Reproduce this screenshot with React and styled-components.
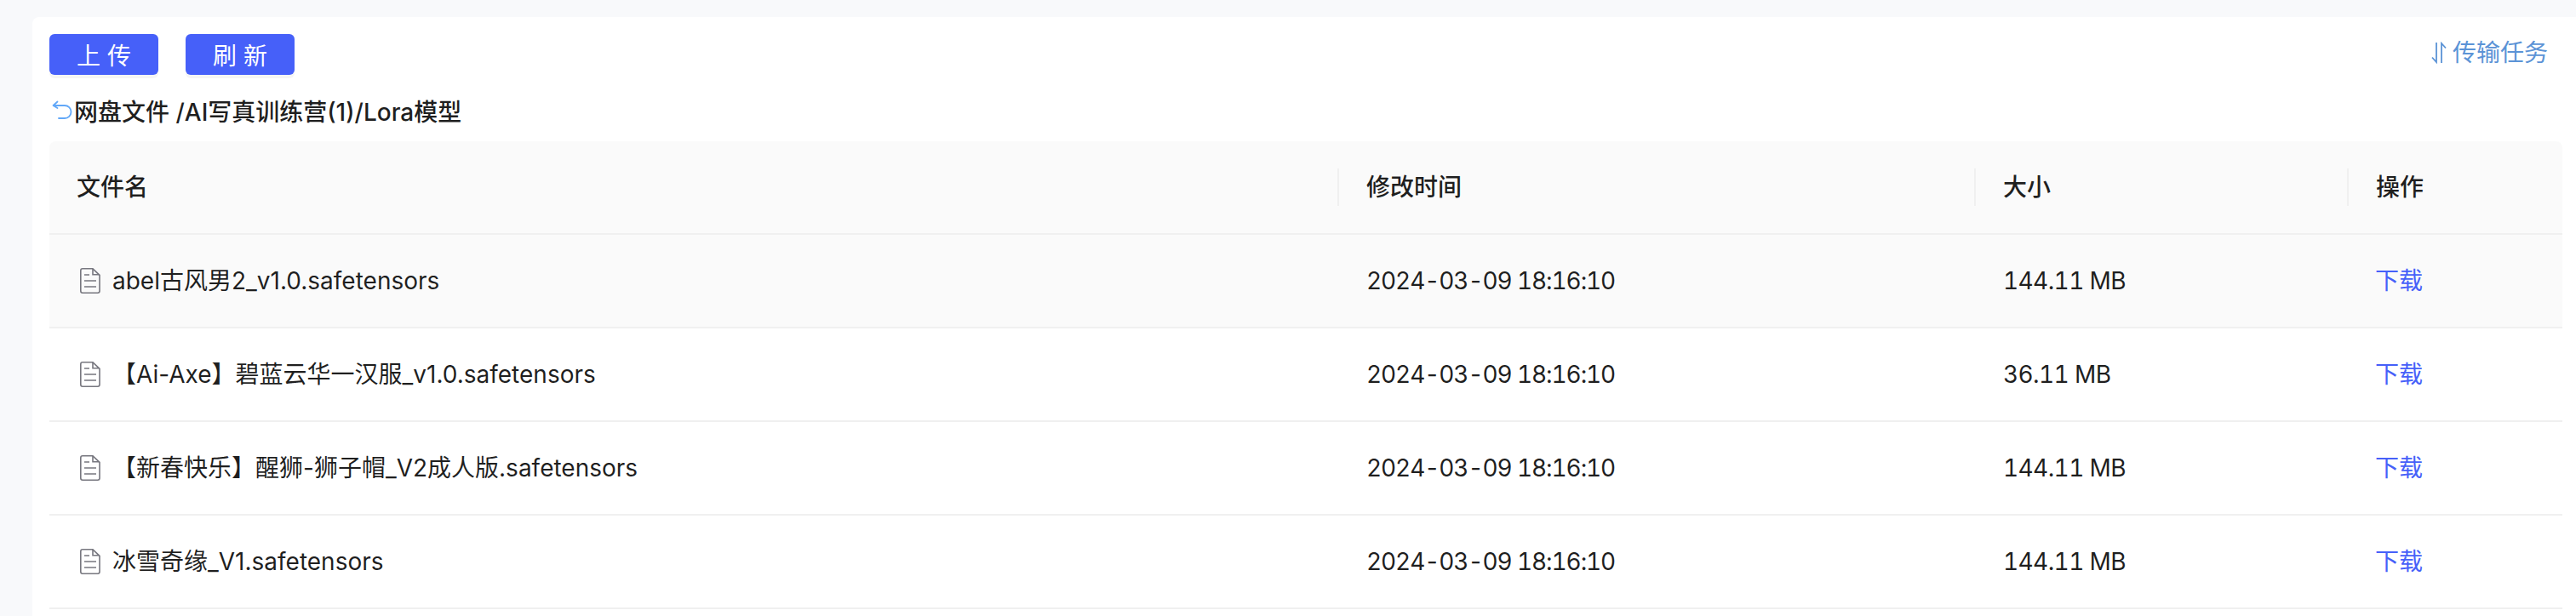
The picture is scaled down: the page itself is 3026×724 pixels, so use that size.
import React from 'react';
import styled, { createGlobalStyle } from 'styled-components';

const fontStack = `Inter, "Noto Sans CJK SC", "Noto Sans", sans-serif`;

const GlobalStyle = createGlobalStyle`
  html, body {
    margin: 0;
    height: 100%;
    overflow: hidden;
    background: #f8f9fb;
    font-family: ${fontStack};
  }
  * { box-sizing: border-box; }
`;

const Page = styled.div`
  padding: 20px 0 0 38px;
  height: 724px;
  overflow: hidden;
`;

const Card = styled.div`
  background: #fff;
  border-radius: 8px 0 0 0;
  padding: 20px 16px 0 20px;
  height: 704px;
`;

const Toolbar = styled.div`
  display: flex;
  justify-content: space-between;
  align-items: flex-start;
  height: 48px;
`;

const ButtonGroup = styled.div`
  display: flex;
  gap: 32px;
`;

const Button = styled.button`
  width: 128px;
  height: 48px;
  padding: 0;
  border: none;
  border-radius: 6px;
  background: #4660f9;
  box-shadow: 0 4px 0 rgba(0, 0, 0, 0.04);
  color: #fff;
  font-family: ${fontStack};
  font-size: 28px;
  letter-spacing: 8px;
  text-indent: 8px;
  cursor: pointer;
`;

const TransferLink = styled.a`
  display: flex;
  align-items: center;
  gap: 7px;
  margin: 1px 17px 0 0;
  color: #5b93d6;
  font-size: 28px;
  line-height: 42px;
`;

const Breadcrumb = styled.div`
  display: flex;
  align-items: center;
  height: 44px;
  margin-top: 20px;
  padding-left: 3px;
  gap: 2px;
  color: rgba(0, 0, 0, 0.88);
  font-size: 28px;
  font-weight: 500;
  white-space: pre;
`;

const Table = styled.div`
  margin-top: 14px;
  font-size: 28px;
  line-height: 44px;
  color: rgba(0, 0, 0, 0.88);
`;

const Row = styled.div`
  display: grid;
  grid-template-columns: 1515px 748px 438px 251px;
  height: 110px;
  border-bottom: 2px solid #f0f0f0;
  background: ${(p) => (p.$active ? '#fafafa' : '#fff')};
`;

const HeaderRow = styled(Row)`
  background: #fafafa;
  border-radius: 8px 8px 0 0;
  font-weight: 500;
`;

const Cell = styled.div`
  position: relative;
  display: flex;
  align-items: center;
  padding: 0 32px;
  white-space: pre;
`;

const NumberCell = styled(Cell)`
  font-variant-numeric: tabular-nums;
  letter-spacing: ${(p) => p.$tracking};
`;

const HeaderCell = styled(Cell)`
  &::before {
    content: '';
    display: ${(p) => (p.$last ? 'none' : 'block')};
    position: absolute;
    top: 32px;
    right: 0;
    width: 2px;
    height: 44px;
    background: #f0f0f0;
  }
`;

const IconSlot = styled.span`
  display: flex;
  margin-left: 4px;
`;

const FileName = styled.span`
  margin-left: 14px;
`;

const DownloadLink = styled.a`
  margin-left: -1px;
  color: #4660f9;
  cursor: pointer;
`;

const FileIcon = () => (
  <IconSlot>
    <svg width="24" height="30" viewBox="0 0 24 30" fill="none" stroke="#77777f" strokeWidth="1.6">
      <path d="M3 .8h12l8 7.5V27a2.2 2.2 0 0 1-2.2 2.2H3A2.2 2.2 0 0 1 .8 27V3A2.2 2.2 0 0 1 3 .8z" />
      <path d="M15 1v6.8h7.8" />
      <path d="M5 8h6M5 15h14M5 22h14" />
    </svg>
  </IconSlot>
);

const BackIcon = () => (
  <svg width="24" height="24" viewBox="0 0 24 24" fill="none" stroke="#62a8f8" strokeWidth="1.8" strokeLinecap="round" strokeLinejoin="round">
    <path d="M2 6h13a7.5 7.5 0 0 1 0 15H8" />
    <path d="M6.5 1.5 1.5 6l5 3" />
  </svg>
);

const TransferIcon = () => (
  <svg width="18" height="26" viewBox="0 0 18 26" fill="none" stroke="#5b93d6" strokeWidth="1.8">
    <path d="M6 1v23L1 18.5" />
    <path d="M12 25V2l5 5.5" />
  </svg>
);

const files = [
  { name: 'abel古风男2_v1.0.safetensors', size: '144.11 MB', active: true },
  { name: '【Ai-Axe】碧蓝云华一汉服_v1.0.safetensors', size: '36.11 MB' },
  { name: '【新春快乐】醒狮-狮子帽_V2成人版.safetensors', size: '144.11 MB' },
  { name: '冰雪奇缘_V1.safetensors', size: '144.11 MB' },
];

export default function App() {
  return (
    <Page>
      <GlobalStyle />
      <Card>
        <Toolbar>
          <ButtonGroup>
            <Button>上传</Button>
            <Button>刷新</Button>
          </ButtonGroup>
          <TransferLink>
            <TransferIcon />
            传输任务
          </TransferLink>
        </Toolbar>
        <Breadcrumb>
          <BackIcon />
          网盘文件 /AI写真训练营(1)/Lora模型
        </Breadcrumb>
        <Table>
          <HeaderRow>
            <HeaderCell>文件名</HeaderCell>
            <HeaderCell>修改时间</HeaderCell>
            <HeaderCell>大小</HeaderCell>
            <HeaderCell $last>操作</HeaderCell>
          </HeaderRow>
          {files.map((file) => (
            <Row key={file.name} $active={file.active}>
              <Cell>
                <FileIcon />
                <FileName>{file.name}</FileName>
              </Cell>
              <NumberCell $tracking="-1.1px">2024-03-09 18:16:10</NumberCell>
              <NumberCell $tracking="-0.6px">{file.size}</NumberCell>
              <Cell>
                <DownloadLink>下载</DownloadLink>
              </Cell>
            </Row>
          ))}
        </Table>
      </Card>
    </Page>
  );
}
